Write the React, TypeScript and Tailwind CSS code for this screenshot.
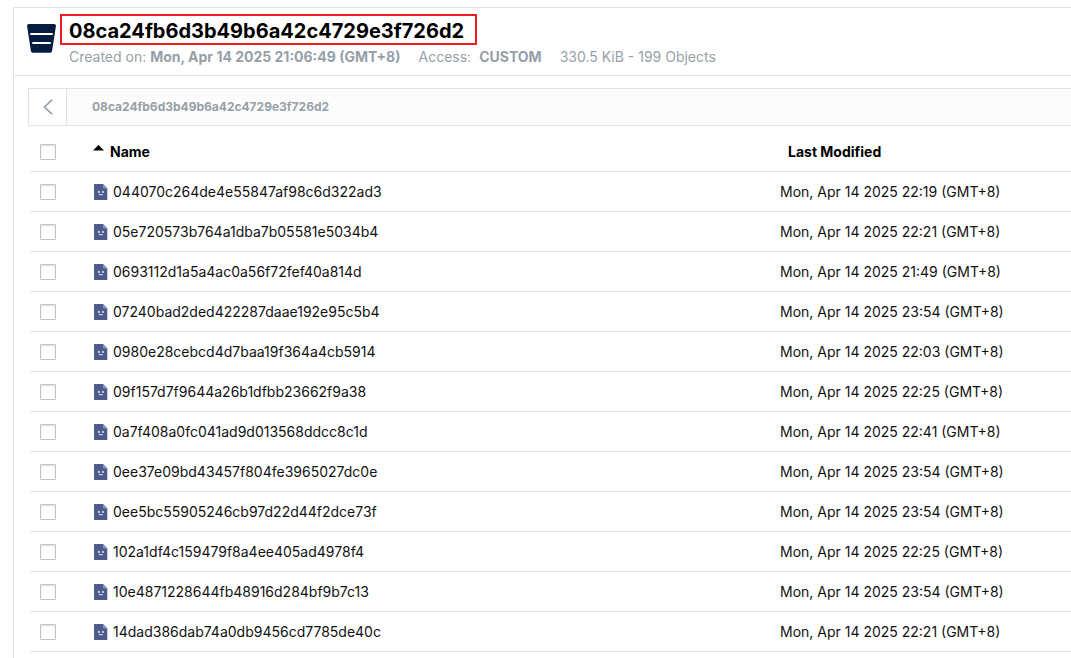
interface StoredObject {
  name: string;
  modified: string;
}

const BUCKET = "08ca24fb6d3b49b6a42c4729e3f726d2";

const OBJECTS: StoredObject[] = [
  { name: "044070c264de4e55847af98c6d322ad3", modified: "Mon, Apr 14 2025 22:19 (GMT+8)" },
  { name: "05e720573b764a1dba7b05581e5034b4", modified: "Mon, Apr 14 2025 22:21 (GMT+8)" },
  { name: "0693112d1a5a4ac0a56f72fef40a814d", modified: "Mon, Apr 14 2025 21:49 (GMT+8)" },
  { name: "07240bad2ded422287daae192e95c5b4", modified: "Mon, Apr 14 2025 23:54 (GMT+8)" },
  { name: "0980e28cebcd4d7baa19f364a4cb5914", modified: "Mon, Apr 14 2025 22:03 (GMT+8)" },
  { name: "09f157d7f9644a26b1dfbb23662f9a38", modified: "Mon, Apr 14 2025 22:25 (GMT+8)" },
  { name: "0a7f408a0fc041ad9d013568ddcc8c1d", modified: "Mon, Apr 14 2025 22:41 (GMT+8)" },
  { name: "0ee37e09bd43457f804fe3965027dc0e", modified: "Mon, Apr 14 2025 23:54 (GMT+8)" },
  { name: "0ee5bc55905246cb97d22d44f2dce73f", modified: "Mon, Apr 14 2025 23:54 (GMT+8)" },
  { name: "102a1df4c159479f8a4ee405ad4978f4", modified: "Mon, Apr 14 2025 22:25 (GMT+8)" },
  { name: "10e4871228644fb48916d284bf9b7c13", modified: "Mon, Apr 14 2025 23:54 (GMT+8)" },
  { name: "14dad386dab74a0db9456cd7785de40c", modified: "Mon, Apr 14 2025 22:21 (GMT+8)" },
];

function BucketIcon() {
  return (
    <svg width="29" height="29" viewBox="0 0 30 30" className="shrink-0" aria-hidden="true">
      <path
        d="M2 0h26c1.3 0 2.100 1 1.900 2.300L26 27.600c-.2 1.400-1.200 2.200-2.500 2.200h-17c-1.300 0-2.300-.8-2.500-2.200L.1 2.300C-.1 1 .7 0 2 0z"
        fill="#081c42"
      />
      <path d="M3.500 9.300h23v2.100h-23zM5.500 18.600h19v2.100h-19z" fill="#fff" />
    </svg>
  );
}

function FileIcon() {
  return (
    <svg width="14" height="16" viewBox="0 0 14 16" className="shrink-0" aria-hidden="true">
      <path d="M.7 0H9l4.300 4.500v10.800c0 .4-.3.7-.7.7H.7c-.4 0-.7-.3-.7-.7V.7C0 .3.300 0 .7 0z" fill="#4d5c8c" />
      <path d="M9 0l4.300 4.500H9.700C9.300 4.500 9 4.200 9 3.800z" fill="#8492c4" />
      <path d="M4 7.200l1.700 1.500M5.700 7.200L4 8.700M8 7.200l1.700 1.500M9.700 7.200L8 8.700M4.800 11.200c.8-.9 3.200-.9 4 0" fill="none" stroke="#fff" strokeWidth=".9" />
    </svg>
  );
}

function Checkbox({ label }: { label: string }) {
  return (
    <input
      type="checkbox"
      aria-label={label}
      className="block size-4 appearance-none rounded-[1px] border border-[#c3c3c3] bg-white shadow-[inset_0_1px_2px_rgba(0,0,0,0.12)] checked:bg-[#081c42]"
    />
  );
}

export default function App() {
  return (
    <div className="min-h-screen overflow-hidden bg-white pt-[7px] pl-[13px] font-['Inter',sans-serif] text-sm text-black">
      <main className="min-h-[651px] border-t border-l border-[#e2e2e2]">
        <header className="flex items-start border-b border-[#e2e2e2] pt-1.5 pb-[7px] pl-[13px]">
          <div className="pt-2.5">
            <BucketIcon />
          </div>
          <div className="pl-1">
            <h1 className="flex h-[31px] w-[417px] items-center border-2 border-[#ed1c24] pt-0.5 pl-[7px] text-xl font-bold whitespace-nowrap">
              {BUCKET}
            </h1>
            <div className="flex h-[23px] items-center gap-[18px] pt-px pl-[9px] whitespace-nowrap text-[#969fa8]">
              <span>
                Created on: <strong>Mon, Apr 14 2025 21:06:49 (GMT+8)</strong>
              </span>
              <span className="flex gap-2">
                Access: <strong>CUSTOM</strong>
              </span>
              <span>330.5 KiB - 199 Objects</span>
            </div>
          </div>
        </header>

        <section className="pt-3 pl-3.5">
          <nav className="flex h-[38px] border-y border-l border-[#e2e2e2] bg-[#fcfcfc]">
            <button type="button" aria-label="Back" className="flex w-[38px] items-center justify-center border-r border-[#e2e2e2] bg-white">
              <svg width="10" height="16" viewBox="0 0 10 16" fill="none" stroke="#969fa8" strokeWidth="1.700" aria-hidden="true">
                <path d="M9 .8L1.500 8 9 15.200" />
              </svg>
            </button>
            <a href="#" className="flex items-center pl-[25px] text-xs font-bold text-[#969fa8]">
              {BUCKET}
            </a>
          </nav>

          <div className="pt-1.5 pl-0.5">
            <table className="w-full table-fixed border-separate border-spacing-0 text-left">
              <colgroup>
                <col className="w-[63px]" />
                <col />
                <col className="w-[291px]" />
              </colgroup>
              <thead>
                <tr>
                  <th className="h-10 border-b border-[#e2e2e2] pl-2.5">
                    <Checkbox label="Select all" />
                  </th>
                  <th className="border-b border-[#e2e2e2] font-bold">
                    <span className="flex items-center gap-1.5">
                      <svg width="11" height="6" viewBox="0 0 11 6" className="mb-2" aria-hidden="true">
                        <path d="M0 5.500L5.500 0 11 5.500z" />
                      </svg>
                      Name
                    </span>
                  </th>
                  <th className="border-b border-[#e2e2e2] pl-2 font-bold">Last Modified</th>
                </tr>
              </thead>
              <tbody className="text-[#111]">
                {OBJECTS.map((o) => (
                  <tr key={o.name}>
                    <td className="h-10 border-b border-[#e2e2e2] pl-2.5">
                      <Checkbox label={o.name} />
                    </td>
                    <td className="border-b border-[#e2e2e2]">
                      <span className="flex items-center gap-[5px] pl-px">
                        <FileIcon />
                        {o.name}
                      </span>
                    </td>
                    <td className="border-b border-[#e2e2e2]">{o.modified}</td>
                  </tr>
                ))}
              </tbody>
            </table>
          </div>
        </section>
      </main>
    </div>
  );
}
